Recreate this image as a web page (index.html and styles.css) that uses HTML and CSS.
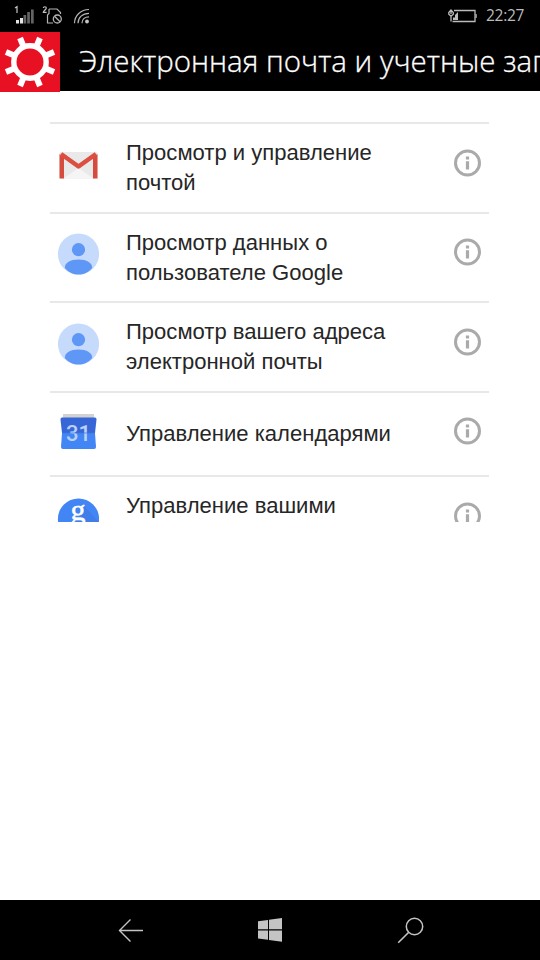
FILE: index.html
```html
<!DOCTYPE html>
<html lang="ru">
<head>
<meta charset="utf-8">
<title>Электронная почта и учетные записи</title>
<link rel="stylesheet" href="styles.css">
</head>
<body>
<svg class="defs" aria-hidden="true">
  <symbol id="info" viewBox="0 0 28 28">
    <circle cx="13.500" cy="14" r="12" fill="none" stroke="#aaa" stroke-width="3"/>
    <path d="M11.900 7.500h3.200v3h-3.200zM11.900 12.300h3.200v8.200h-3.200z" fill="#aaa"/>
  </symbol>
  <symbol id="person" viewBox="0 0 42 42">
    <circle cx="21.500" cy="21" r="20.600" fill="#c6dafc"/>
    <circle cx="21.500" cy="16.700" r="6.600" fill="#5e97f6"/>
    <path d="M7.800 35C7.800 29.500 13.500 26.500 21.500 26.500S35.200 29.500 35.200 35C31.500 39.600 26.500 41.600 21.500 41.600S11.500 39.600 7.800 35z" fill="#5e97f6"/>
  </symbol>
</svg>
<div class="phone">
  <header class="status">
    <svg class="signals" width="96" height="32" viewBox="0 0 96 32">
      <path d="M15 8l2-1.300V13" fill="none" stroke="#c4c4c4" stroke-width="1.200"/>
      <path d="M16 20h3v3.500h-3zM20 18h3v5.500h-3z" fill="#e4e4e4"/>
      <path d="M23.500 15h2.700v8.500h-2.700zM27.200 12h2.700v11.500h-2.700zM31 9.500h2.700v14H31z" fill="#646464"/>
      <path d="M43.300 8c.2-1.700 3-1.700 3 0 0 1.500-3 3-3 4.300h3.300" fill="none" stroke="#c4c4c4" stroke-width="1.200"/>
      <path d="M49 9h8l3.500 3.500V14M49 9v4.500l-1.500 1.500v8H53" fill="none" stroke="#b4b4b4" stroke-width="1.200"/>
      <circle cx="57.300" cy="19" r="4" fill="none" stroke="#b4b4b4" stroke-width="1.300"/>
      <path d="M54.500 16.200l5.600 5.600" stroke="#b4b4b4" stroke-width="1.300"/>
      <g fill="none" stroke="#b4b4b4" stroke-width="1.200">
        <path d="M74.500 23.300C74.500 15.500 81 9.500 89 9.500M78 23.300C78 17.500 82.500 13.300 89 13.300M82 23.300c0-4 3-6.500 7-6.500"/>
      </g>
      <circle cx="87" cy="21.500" r="1.900" fill="#c4c4c4"/>
    </svg>
    <svg class="battery" width="30" height="16" viewBox="0 0 30 16">
      <path d="M6 2.500h21v11H4.500" fill="none" stroke="#bbb" stroke-width="1.300"/>
      <path d="M27.500 6h1.200v4h-1.200zM10 4v8H5V9.500h2V7l3-3z" fill="#bbb"/>
      <path d="M3 13.500V8M.8 4.500L3 2l2.300 2.500v1.700L3 8.200.8 6.200zM3 4v2" fill="none" stroke="#bbb" stroke-width="1.300"/>
    </svg>
    <span class="clock">22:27</span>
  </header>
  <div class="titlebar">
    <div class="tile">
      <svg width="60" height="60" viewBox="-30 -30 60 60">
        <circle r="16.200" fill="none" stroke="#fff" stroke-width="5.400"/>
        <g stroke="#fff" stroke-width="6">
          <path id="tooth" d="M0-17V-26" transform="rotate(22.500)"/>
          <use href="#tooth" transform="rotate(45)"/>
          <use href="#tooth" transform="rotate(90)"/>
          <use href="#tooth" transform="rotate(135)"/>
          <use href="#tooth" transform="rotate(180)"/>
          <use href="#tooth" transform="rotate(225)"/>
          <use href="#tooth" transform="rotate(270)"/>
          <use href="#tooth" transform="rotate(315)"/>
        </g>
      </svg>
    </div>
    <h1 class="title">Электронная почта и учетные записи</h1>
  </div>
  <main class="content">
    <ul class="scopes">
      <li class="scope">
        <svg class="icon" viewBox="0 0 42 42">
          <rect x="2.500" y="8" width="38" height="26.500" rx="1.500" fill="#e9e9e9"/>
          <path d="M6.500 34.500l15-10.500 15 10.500z" fill="#f5f5f5"/>
          <path d="M2.500 34.500V10l4.500 4v20.500zM40.500 34.500V10L36 14v20.500z" fill="#d54b3d"/>
          <path d="M4 10l17.500 12.500L39 10" fill="none" stroke="#dc4e41" stroke-width="4.500" stroke-linejoin="round"/>
        </svg>
        <span class="label">Просмотр и управление почтой</span>
        <svg class="info"><use href="#info"/></svg>
      </li>
      <li class="scope">
        <svg class="icon"><use href="#person"/></svg>
        <span class="label">Просмотр данных о пользователе Google</span>
        <svg class="info"><use href="#info"/></svg>
      </li>
      <li class="scope">
        <svg class="icon"><use href="#person"/></svg>
        <span class="label">Просмотр вашего адреса электронной почты</span>
        <svg class="info"><use href="#info"/></svg>
      </li>
      <li class="scope single">
        <svg class="icon" viewBox="0 0 42 42">
          <path d="M6 3h31v5H6z" fill="#d2d2d2"/>
          <path d="M5 6.500h33q1.500 0 1.500 2L38 22H5L3.500 8.500q0-2 1.500-2z" fill="#3767d6"/>
          <path d="M5 22h33l1 14q0 2-2 2H6q-2 0-2-2z" fill="#4285f4"/>
          <text class="day" x="21.500" y="30" text-anchor="middle">31</text>
          <path d="M5 22h33" stroke="#3f75de" stroke-width=".7"/>
        </svg>
        <span class="label">Управление календарями</span>
        <svg class="info"><use href="#info"/></svg>
      </li>
      <li class="scope last">
        <svg class="icon" viewBox="0 0 42 42">
          <circle cx="21.500" cy="21" r="20.600" fill="#4285f4"/>
          <path d="M27 8l14 15-3 10-10 8-10-15z" fill="#3f7de8"/>
          <text class="g" x="21" y="21.500" text-anchor="middle">g</text>
        </svg>
        <span class="label">Управление вашими</span>
        <svg class="info"><use href="#info"/></svg>
      </li>
    </ul>
  </main>
  <nav class="navbar">
    <svg width="28" height="28" viewBox="0 0 28 28"><path d="M27 14.500H3M14.500 3.500l-11 11 11 11" fill="none" stroke="#c4c4c4" stroke-width="1.400"/></svg>
    <svg width="28" height="28" viewBox="0 0 28 28"><path d="M1 5.200l10-1.300v9.300H1zM12 3.700L25 2v11.200H12zM1 14.500h10v9.300L1 22.500zM12 14.500h13v11.200L12 24z" fill="#c4c4c4"/></svg>
    <svg width="28" height="28" viewBox="0 0 28 28"><path d="M11.500 16.500L1.200 26.800" stroke="#c4c4c4" stroke-width="1.600"/><circle cx="17.500" cy="10.500" r="8.200" fill="none" stroke="#c4c4c4" stroke-width="1.500"/></svg>
  </nav>
</div>
</body>
</html>
```
FILE: styles.css
```css
* { box-sizing: border-box; }
body { margin: 0; background: #fff; }
svg { display: block; flex: none; }
.defs { display: none; }
.phone {
  width: 540px;
  height: 960px;
  display: flex;
  flex-direction: column;
  overflow: hidden;
}
.status {
  height: 32px;
  flex: none;
  display: flex;
  background: #000;
}
.battery { margin: 8px 0 0 auto; }
.clock {
  width: 62px;
  padding-left: 8px;
  font: 15.5px/31px "Open Sans", sans-serif;
  color: #bbb;
  letter-spacing: -.3px;
}
.titlebar {
  height: 60px;
  flex: none;
  display: flex;
  background: linear-gradient(#000 59px, #fff 59px);
}
.tile { width: 60px; height: 60px; flex: none; background: #e81123; }
.title {
  margin: 0 0 0 19px;
  font: 300 29.5px/57px "Open Sans", sans-serif;
  color: #fff;
  -webkit-text-stroke: .3px #fff;
  white-space: nowrap;
}
.content { flex: 1; padding: 30px 51px 0 50px; }
.scopes {
  height: 400px;
  margin: 0;
  padding: 0;
  list-style: none;
  overflow: hidden;
}
.scope {
  height: 90px;
  display: flex;
  align-items: center;
  padding: 0 7px;
  border-top: 2px solid #e8e8e8;
}
.scope:nth-child(2) { height: 89px; }
.single { height: 84px; }
.last { height: 90px; align-items: flex-start; }
.icon { width: 42px; height: 42px; margin-top: -7px; }
.single .icon { margin-top: -4px; }
.label {
  flex: 1;
  margin: 0 54px 0 27px;
  font: 22.05px/30px "Liberation Sans", sans-serif;
  color: #262626;
}
.info { width: 28px; height: 28px; margin-top: -11px; }
.single .info { margin-top: -6px; }
.last .icon { margin-top: 21px; }
.last .label { margin-top: 14px; }
.last .info { margin-top: 25px; }
.day { font: 500 22px Roboto, sans-serif; fill: #b9d0f8; }
.g { font: 30px "Liberation Serif", serif; fill: #fff; stroke: #fff; stroke-width: .5px; }
.navbar {
  height: 60px;
  flex: none;
  display: flex;
  justify-content: space-between;
  align-items: center;
  padding: 0 115px 0 116px;
  background: #000;
}
```
